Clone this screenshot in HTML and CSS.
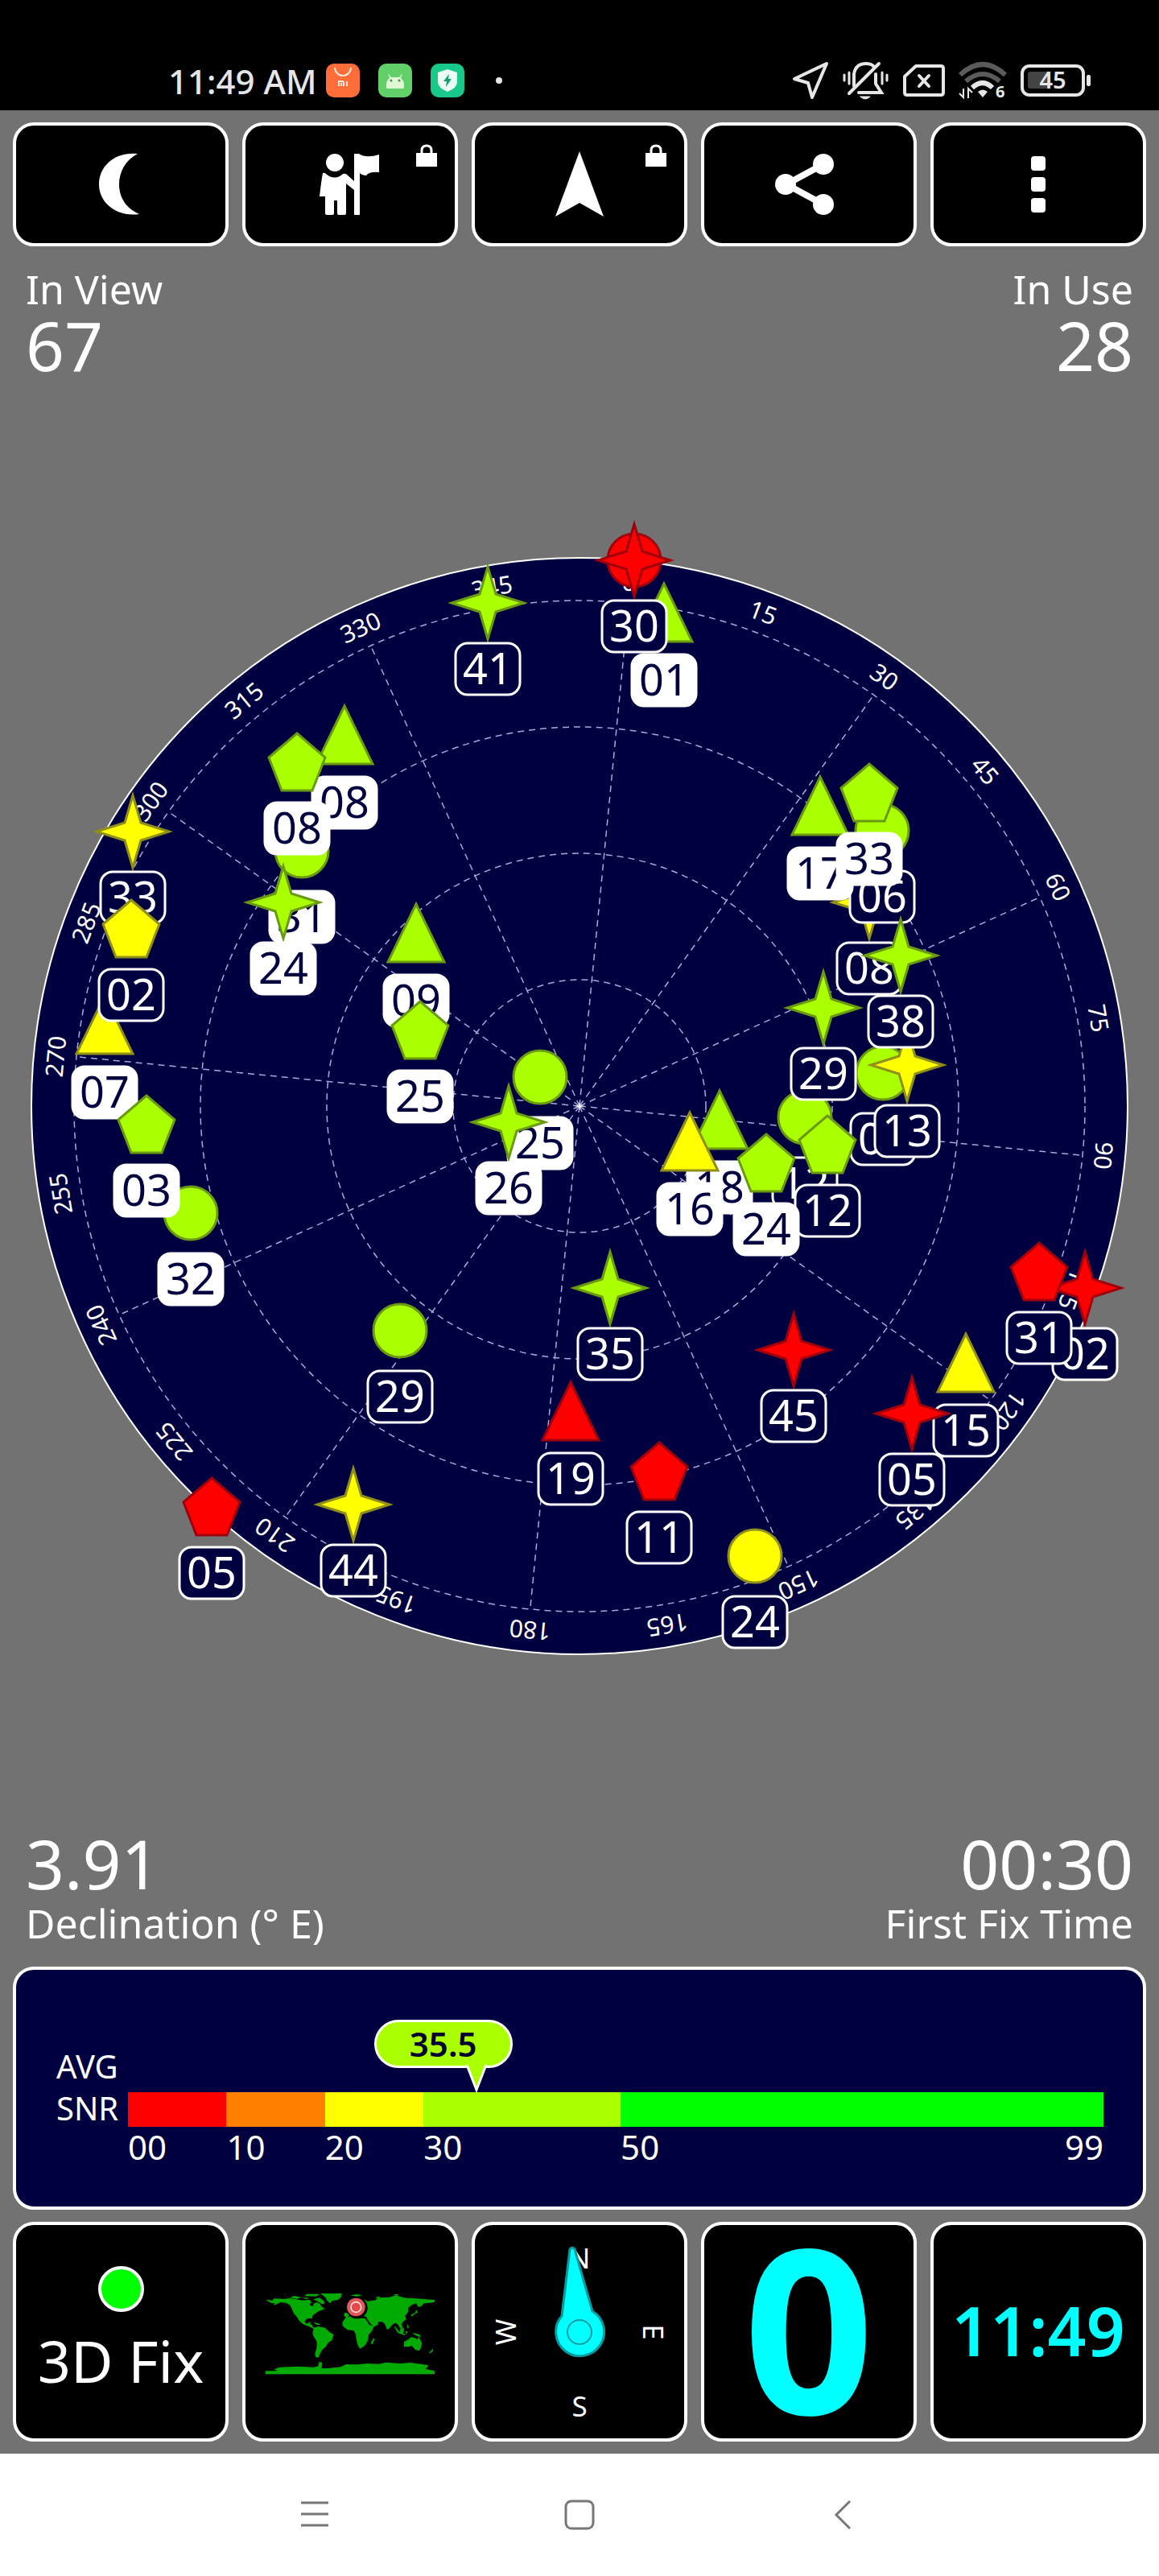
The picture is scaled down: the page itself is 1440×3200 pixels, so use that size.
FILE: index.html
```
<!DOCTYPE html>
<html lang="en">
<head>
  <meta charset="UTF-8">
  <meta name="viewport" content="width=device-width, initial-scale=1">
  <title>GPS Status</title>
  <link rel="stylesheet" href="styles.css">
</head>
<body>

  <!-- Status bar -->
  <header class="statusbar">
    <div class="status-left">
      <span class="clock">11:49 AM</span>
      <svg class="app-icon" viewBox="0 0 42 42">
        <rect width="42" height="42" rx="10" fill="#ff6e38"/>
        <path d="M11 5a10 10 0 0 0 20 0" fill="none" stroke="#ffe6dc" stroke-width="2"/>
        <path d="M16 28v-6h4q2 0 2 2v4M19 24v4M26 22v6" fill="none" stroke="#ffe6dc" stroke-width="2"/>
      </svg>
      <svg class="app-icon" viewBox="0 0 42 42">
        <rect width="42" height="42" rx="10" fill="#62d068"/>
        <path d="M10 30v-4q0-5 4-8l-2-6 4 5h10l4-5-2 6q4 3 4 8v4q0 1-2 1H12q-2 0-2-1z" fill="#e0f7d4"/>
        <circle cx="16" cy="21" r="1.500" fill="#43915a"/>
        <circle cx="26" cy="21" r="1.500" fill="#43915a"/>
      </svg>
      <svg class="app-icon" viewBox="0 0 42 42">
        <rect width="42" height="42" rx="10" fill="#18c98a"/>
        <path d="M21 7l12 4v12q0 7-12 12Q9 30 9 23V11z" fill="#eafcf4"/>
        <path d="M23 13l-7 9h4l-1 7 7-10h-4z" fill="#139b74"/>
      </svg>
      <span class="dot"></span>
    </div>
    <div class="status-right">
      <svg class="st-arrow" viewBox="0 0 46 48"><path d="M43 3L3 22l17 5 5 18z" fill="none" stroke="#e6e6e6" stroke-width="4" stroke-linejoin="round"/></svg>
      <svg class="st-bell" viewBox="0 0 58 48" fill="none" stroke="#e6e6e6" stroke-width="4" stroke-linecap="round">
        <path d="M8 40L45 3M14 31V16Q16 3 29 3q6 0 9 3M41 16v12l7 11H20"/>
        <path d="M2 17v7M8 14v14M49 14v14M55 17v7" stroke-width="3"/>
        <path d="M22 44h12q-6 6-12 0z" fill="#e6e6e6" stroke-width="1"/>
      </svg>
      <svg class="st-sim" viewBox="0 0 52 40" fill="none" stroke="#e6e6e6" stroke-width="4" stroke-linecap="round" stroke-linejoin="round">
        <path d="M16 2h31q3 0 3 3v30q0 3-3 3H5q-3 0-3-3V15z"/>
        <path d="M20 14l12 13M32 14L20 27"/>
      </svg>
      <svg class="st-wifi" viewBox="0 0 60 48" fill="none" stroke-width="6">
        <path d="M2 17Q30-9 58 17" stroke="#5b5b5b"/>
        <path d="M9 25q21-18 42 0" stroke="#5b5b5b"/>
        <path d="M17 33q13-12 25 0" stroke="#e6e6e6"/>
        <path d="M24 38q6-5 12 0l-6 7z" fill="#e6e6e6"/>
        <path d="M6 34v11l-5-5M12 46V34l5 5" stroke="#e6e6e6" stroke-width="2"/>
        <text x="46" y="45" class="wifi-gen">6</text>
      </svg>
      <svg class="st-battery" viewBox="0 0 88 40">
        <rect x="2" y="2" width="76" height="36" rx="9" fill="none" stroke="#e6e6e6" stroke-width="4"/>
        <rect x="9" y="9" width="28" height="21" rx="3" fill="#444"/>
        <rect x="82" y="13" width="5" height="14" rx="2" fill="#e6e6e6"/>
        <text x="40" y="30" text-anchor="middle" class="battery-text">45</text>
      </svg>
    </div>
  </header>

  <main class="app">

    <!-- Toolbar -->
    <nav class="toolbar">
      <button class="tile" type="button" aria-label="Night mode">
        <svg class="icon" viewBox="0 0 78 78"><path d="M48 1C20-2 0 16 0 39s22 41 50 37C16 62 18 16 48 1z" transform="translate(12 0)"/></svg>
      </button>
      <button class="tile" type="button" aria-label="Waypoint">
        <svg class="icon" viewBox="0 0 78 78">
          <circle cx="20" cy="12" r="11"/>
          <path d="M5 25q2-1 4 1 11 9 21 0 3-1 5 1l9 8V1h6q9 6 25 1v22q-12-1-16 4-5 0-8-3v52h-7V46L34 38v37q0 2-2 2h-7q-2 0-2-2V59h-4v16q0 2-2 2h-7q-2 0-2-2V54H1q2-18 4-29z"/>
        </svg>
        <svg class="lock" viewBox="0 0 26 28"><path d="M0 11h26v17H0z"/><path d="M7 12V8q0-6 6-6t6 6v4" fill="none" stroke="#fff" stroke-width="3"/></svg>
      </button>
      <button class="tile" type="button" aria-label="Navigate">
        <svg class="icon" viewBox="0 0 78 78"><path d="M39-2L69 79 39 62 9 79z"/></svg>
        <svg class="lock" viewBox="0 0 26 28"><path d="M0 11h26v17H0z"/><path d="M7 12V8q0-6 6-6t6 6v4" fill="none" stroke="#fff" stroke-width="3"/></svg>
      </button>
      <button class="tile" type="button" aria-label="Share">
        <svg class="icon" viewBox="0 0 78 78">
          <path d="M57 14L11 39l46 25" fill="none" stroke="#fff" stroke-width="8"/>
          <circle cx="57" cy="14" r="13"/><circle cx="10" cy="39" r="13"/><circle cx="57" cy="64" r="13"/>
        </svg>
      </button>
      <button class="tile" type="button" aria-label="More">
        <svg class="icon" viewBox="0 0 78 78"><rect x="30" y="4" width="18" height="18" rx="4"/><rect x="30" y="30" width="18" height="18" rx="4"/><rect x="30" y="56" width="18" height="18" rx="4"/></svg>
      </button>
    </nav>

    <section class="stats">
      <div class="stat"><span class="label">In View</span><span class="value">67</span></div>
      <div class="stat right"><span class="label">In Use</span><span class="value">28</span></div>
    </section>

    <!-- Sky view, origin at the zenith -->
    <section class="sky">
      <svg class="radar" viewBox="-720 -720 1440 1440" role="img" aria-label="Satellites in view">
        <defs>
          <path id="star" d="M0-45L10-11 45 0 10 11 0 45-10 11-45 0-10-11z"/>
          <path id="tri" d="M0-38L35 34H-35z"/>
          <path id="pent" d="M0-36L35-6 19 35H-19L-35-6z"/>
          <circle id="circ" r="33"/>
          <rect id="pill" x="-40" y="50" width="80" height="64" rx="15"/>
        </defs>

        <circle class="disc" r="681"/>
        <g class="grid">
          <circle r="628"/><circle r="471"/><circle r="314"/><circle r="157"/>
          <g transform="rotate(5.6)">
            <path d="M0 0V-628M0 0V628M0 0H-628M0 0H628"/>
            <path transform="rotate(30)" d="M0 0V-628M0 0V628M0 0H-628M0 0H628"/>
            <path transform="rotate(60)" d="M0 0V-628M0 0V628M0 0H-628M0 0H628"/>
          </g>
        </g>
        <path d="M0-6L1-1 6 0 1 1 0 6-1 1-6 0-1-1z" fill="#fff"/>

        <g class="bearings" transform="rotate(5.4)">
          <text y="-643">0</text>
          <text y="-643" transform="rotate(15)">15</text>
          <text y="-643" transform="rotate(30)">30</text>
          <text y="-643" transform="rotate(45)">45</text>
          <text y="-643" transform="rotate(60)">60</text>
          <text y="-643" transform="rotate(75)">75</text>
          <text y="-643" transform="rotate(90)">90</text>
          <text y="-643" transform="rotate(105)">105</text>
          <text y="-643" transform="rotate(120)">120</text>
          <text y="-643" transform="rotate(135)">135</text>
          <text y="-643" transform="rotate(150)">150</text>
          <text y="-643" transform="rotate(165)">165</text>
          <text y="-643" transform="rotate(180)">180</text>
          <text y="-643" transform="rotate(195)">195</text>
          <text y="-643" transform="rotate(210)">210</text>
          <text y="-643" transform="rotate(225)">225</text>
          <text y="-643" transform="rotate(240)">240</text>
          <text y="-643" transform="rotate(255)">255</text>
          <text y="-643" transform="rotate(270)">270</text>
          <text y="-643" transform="rotate(285)">285</text>
          <text y="-643" transform="rotate(300)">300</text>
          <text y="-643" transform="rotate(315)">315</text>
          <text y="-643" transform="rotate(330)">330</text>
          <text y="-643" transform="rotate(345)">345</text>
        </g>

        <!-- Satellites, later ones drawn on top -->
        <g class="sats">
          <g class="good" transform="translate(-114 -625)"><use href="#star"/><use href="#pill" class="pill"/><text y="101">41</text></g>
          <g class="good used" transform="translate(105 -611)"><use href="#tri"/><use href="#pill" class="pill"/><text y="101">01</text></g>
          <g class="bad" transform="translate(68 -678)"><use href="#circ"/><use href="#star"/><use href="#pill" class="pill"/><text y="101">30</text></g>

          <g class="good used" transform="translate(-345 -317)"><use href="#circ"/><use href="#pill" class="pill"/><text y="101">31</text></g>
          <g class="good used" transform="translate(-292 -459)"><use href="#tri"/><use href="#pill" class="pill"/><text y="101">08</text></g>
          <g class="good used" transform="translate(-351 -427)"><use href="#pent"/><use href="#pill" class="pill"/><text y="101">08</text></g>
          <g class="good used" transform="translate(-368 -253)"><use href="#star"/><use href="#pill" class="pill"/><text y="101">24</text></g>

          <g class="weak" transform="translate(-555 -341)"><use href="#star"/><use href="#pill" class="pill"/><text y="101">33</text></g>
          <g class="weak used" transform="translate(-590 -99)"><use href="#tri"/><use href="#pill" class="pill"/><text y="101">07</text></g>
          <g class="weak" transform="translate(-557 -220)"><use href="#pent"/><use href="#pill" class="pill"/><text y="101">02</text></g>
          <g class="good used" transform="translate(-483 133)"><use href="#circ"/><use href="#pill" class="pill"/><text y="101">32</text></g>
          <g class="good used" transform="translate(-538 23)"><use href="#pent"/><use href="#pill" class="pill"/><text y="101">03</text></g>

          <g class="good used" transform="translate(-203 -213)"><use href="#tri"/><use href="#pill" class="pill"/><text y="101">09</text></g>
          <g class="good used" transform="translate(-198 -94)"><use href="#pent"/><use href="#pill" class="pill"/><text y="101">25</text></g>
          <g class="good used" transform="translate(-49 -36)"><use href="#circ"/><use href="#pill" class="pill"/><text y="101">25</text></g>
          <g class="good used" transform="translate(-88 20)"><use href="#star"/><use href="#pill" class="pill"/><text y="101">26</text></g>

          <g class="weak" transform="translate(360 -253)"><use href="#star"/><use href="#pill" class="pill"/><text y="101">08</text></g>
          <g class="good" transform="translate(376 -342)"><use href="#circ"/><use href="#pill" class="pill"/><text y="101">06</text></g>
          <g class="good used" transform="translate(299 -371)"><use href="#tri"/><use href="#pill" class="pill"/><text y="101">17</text></g>
          <g class="good used" transform="translate(360 -389)"><use href="#pent"/><use href="#pill" class="pill"/><text y="101">33</text></g>

          <g class="good" transform="translate(280 14)"><use href="#circ"/><use href="#pill" class="pill"/><text y="101">12</text></g>
          <g class="good" transform="translate(377 -41)"><use href="#circ"/><use href="#pill" class="pill"/><text y="101">05</text></g>
          <g class="weak" transform="translate(407 -51)"><use href="#star"/><use href="#pill" class="pill"/><text y="101">13</text></g>
          <g class="good" transform="translate(399 -187)"><use href="#star"/><use href="#pill" class="pill"/><text y="101">38</text></g>
          <g class="good" transform="translate(303 -122)"><use href="#star"/><use href="#pill" class="pill"/><text y="101">29</text></g>
          <g class="good" transform="translate(308 48)"><use href="#pent"/><use href="#pill" class="pill"/><text y="101">12</text></g>
          <g class="good used" transform="translate(174 19)"><use href="#tri"/><use href="#pill" class="pill"/><text y="101">18</text></g>
          <g class="weak used" transform="translate(137 46)"><use href="#tri"/><use href="#pill" class="pill"/><text y="101">16</text></g>
          <g class="good used" transform="translate(232 71)"><use href="#pent"/><use href="#pill" class="pill"/><text y="101">24</text></g>

          <g class="good" transform="translate(38 226)"><use href="#star"/><use href="#pill" class="pill"/><text y="101">35</text></g>
          <g class="good" transform="translate(-223 279)"><use href="#circ"/><use href="#pill" class="pill"/><text y="101">29</text></g>
          <g class="bad" transform="translate(-11 381)"><use href="#tri"/><use href="#pill" class="pill"/><text y="101">19</text></g>
          <g class="bad" transform="translate(99 454)"><use href="#pent"/><use href="#pill" class="pill"/><text y="101">11</text></g>
          <g class="bad" transform="translate(-457 498)"><use href="#pent"/><use href="#pill" class="pill"/><text y="101">05</text></g>
          <g class="weak" transform="translate(-281 495)"><use href="#star"/><use href="#pill" class="pill"/><text y="101">44</text></g>
          <g class="weak" transform="translate(218 559)"><use href="#circ"/><use href="#pill" class="pill"/><text y="101">24</text></g>
          <g class="bad" transform="translate(266 303)"><use href="#star"/><use href="#pill" class="pill"/><text y="101">45</text></g>
          <g class="weak" transform="translate(480 321)"><use href="#tri"/><use href="#pill" class="pill"/><text y="101">15</text></g>
          <g class="bad" transform="translate(413 382)"><use href="#star"/><use href="#pill" class="pill"/><text y="101">05</text></g>
          <g class="bad" transform="translate(628 226)"><use href="#star"/><use href="#pill" class="pill"/><text y="101">02</text></g>
          <g class="bad" transform="translate(571 206)"><use href="#pent"/><use href="#pill" class="pill"/><text y="101">31</text></g>
        </g>
      </svg>
    </section>

    <section class="stats bottom">
      <div class="stat"><span class="value">3.91</span><span class="label">Declination (° E)</span></div>
      <div class="stat right"><span class="value">00:30</span><span class="label">First Fix Time</span></div>
    </section>

    <!-- Signal strength -->
    <section class="snr">
      <div class="snr-label"><span>AVG</span><span>SNR</span></div>
      <div class="snr-scale">
        <div class="bar">
          <span class="seg s0"></span><span class="seg s10"></span><span class="seg s20"></span><span class="seg s30"></span><span class="seg s50"></span>
          <div class="marker" style="left: 35.7%">
            <span class="bubble">35.5</span>
            <svg class="pointer" viewBox="0 0 28 34"><path d="M2 0L14 31 26 0" fill="#af0" stroke="#fff" stroke-width="3"/></svg>
          </div>
        </div>
        <div class="ticks">
          <span class="t10">00</span><span class="t10">10</span><span class="t10">20</span><span class="t20">30</span><span class="t49">50</span><span class="last">99</span>
        </div>
      </div>
    </section>

    <!-- Gauges -->
    <section class="gauges">
      <button class="tile fix" type="button"><span class="led"></span><span>3D Fix</span></button>
      <button class="tile" type="button" aria-label="World map">
        <svg class="map" viewBox="60 54 630 304">
          <g fill="#0a0">
            <path d="M60 79l14 2 12 1 4-7 40 1 20-2 25 4 25 4 22-3 10 9-9 9 12 8 5-12 10-4 12 5 8 12 11 6-14 7-10 4-12 8-10 8-2 11-10-2-12 4-5 8 6 9 9-4 7-5-2 10 8 3 2 8 10 4-8 2-12-6-14-6-14-6-12-10-10-16-12-14-6-16-8-14-14-8-20-2-18 8-8 3 4-8-13 0z"/>
            <path d="M264 56h81l-4 14-11 10-22 4-8 9-10-9-7-13zM150 72l16-7 28 5-18 6zM205 66l8-8h48l-12 9zM238 78l22-6 16 10 4 12-10 2-14-9zM195 72l26 0-8 6zM236 163l20 4 12 7-18-2z"/>
            <path d="M240 184l16-5 26 5 15 15 17 10-7 22-14 9-9 15-12 10-10 17-5 13-11-2-2-13 6-20 1-24-12-20-4-12z"/>
            <path d="M360 144l32-4 10 6 30 4 14 22 18 8-8 16-12 14-2 20-12 20-18 12-8-12-6-22-2-20-8-14-22-2-18-14-2-14zM462 222l4 6-7 16-8-1z"/>
            <path d="M352 140l2-12 14 0-8-10 14-10 16-8 6-14 14-8 20 2 10 5 30-4 10-9 40-2 25-7 30 9 45 3 40 3 30 2v8l-18 3-22 2-10 12-12 1-6-13-17 6-13 10-1 16-11 15 4 13-12 9-6 10 6 9-10 6-8-14-8-7-12 5-14 16-8 3-8-21-10-7-14 0-1 10-17 9-14-16-8-12-5-10-16-4-10-6-10 6-20-6-16 12zM376 64l20-5 25 3-18 5zM466 72l22-6-8 8zM535 60l22-2-8 6z"/>
            <path d="M622 116l5 10-22 15-6-4 18-8zM542 178l16 20 22 10-2 4-24-8-14-22zM560 188l16-5-2 20-12 0zM586 168l9 16-6 2zM605 203l29 5 4 12-18-7zM582 196l8 2-6 12z"/>
            <path d="M576 236l15-8 11-9 15 3 8 5 6-9 12 24-5 19-7 9-14-5-11-13-18 3-12 0zM684 262v9l-13 9-2-3z"/>
            <path d="M60 345h45l-14-6 20-8 69-3 60 3 16-4 4-17 12 5-4 20 22 0 50-5 20-10 40 1 40-4 40 2 30-6 50 4 40-3 40 5 28 5-12 13 34 8v12H60z"/>
          </g>
          <circle cx="400" cy="110" r="40" fill="#000"/>
          <circle cx="397" cy="107" r="34" fill="#e0585a"/>
          <circle cx="397" cy="107" r="19" fill="#e5484b" stroke="#ffe3d8" stroke-width="5"/>
        </svg>
      </button>
      <button class="tile" type="button" aria-label="Compass">
        <svg class="compass" viewBox="-130 -130 260 260">
          <g class="rose">
            <text y="-79">N</text><text y="105">S</text>
            <text transform="rotate(-90)" y="-79">W</text><text transform="rotate(90)" y="-79">E</text>
          </g>
          <path d="M-12-103Q-9-107-6-103L16-26A30 30 0 1 1-22-20z" fill="#0ff" stroke="#079a9e" stroke-width="3"/>
          <circle r="15" fill="#0ff" stroke="#079a9e" stroke-width="2"/>
        </svg>
      </button>
      <button class="tile speed" type="button">0</button>
      <button class="tile time" type="button">11:49</button>
    </section>
  </main>

  <!-- System navigation -->
  <footer class="navbar">
    <button type="button" aria-label="Recent apps"><svg viewBox="0 0 38 38"><path d="M2 4h34M2 18h34M2 32h34"/></svg></button>
    <button type="button" aria-label="Home"><svg viewBox="0 0 38 38"><rect x="2" y="2" width="34" height="34" rx="7"/></svg></button>
    <button type="button" aria-label="Back"><svg viewBox="0 0 38 38"><path d="M26 2L9 19l17 17"/></svg></button>
  </footer>

</body>
</html>
```
FILE: styles.css
```
* {
  box-sizing: border-box;
}
body {
  margin: 0;
  min-height: 100vh;
  display: flex;
  flex-direction: column;
  background: #fff;
  color: #fff;
  font-family: "Noto Sans", "Open Sans", sans-serif;
}
button {
  font-family: inherit;
  color: inherit;
  padding: 0;
  cursor: pointer;
}
svg {
  display: block;
}

/* status bar */
.statusbar {
  height: 137px;
  padding: 63px 84px 0 209px;
  background: #000;
  display: flex;
  justify-content: space-between;
  align-items: flex-start;
}
.status-left,
.status-right {
  display: flex;
  align-items: center;
  height: 74px;
}
.status-left {
  gap: 23px;
}
.clock {
  font-size: 42px;
  font-weight: 500;
  color: #e6e6e6;
  margin-right: -12px;
}
.app-icon {
  width: 42px;
  height: 42px;
}
.dot {
  width: 8px;
  height: 8px;
  border-radius: 50%;
  background: #e6e6e6;
  margin-left: 16px;
}
.status-right {
  gap: 17px;
}
.st-arrow {
  width: 46px;
  height: 48px;
}
.st-bell {
  width: 58px;
  height: 48px;
}
.st-sim {
  width: 52px;
  height: 40px;
}
.st-wifi {
  width: 60px;
  height: 48px;
  overflow: visible;
}
.st-battery {
  width: 88px;
  height: 40px;
}
.wifi-gen {
  font-size: 20px;
  font-weight: 700;
  fill: #e6e6e6;
}
.battery-text {
  font-size: 29px;
  font-weight: 600;
  fill: #e6e6e6;
}

/* app */
.app {
  flex: 1;
  display: flex;
  flex-direction: column;
  padding: 15px 16px;
  background: #727272;
}
.toolbar,
.gauges {
  display: grid;
  grid-template-columns: repeat(5, 1fr);
  gap: 17px;
}
.tile {
  position: relative;
  display: flex;
  align-items: center;
  justify-content: center;
  background: #000;
  border: 4px solid #fff;
  border-radius: 26px;
}
.toolbar .tile {
  height: 154px;
}
.icon {
  width: 78px;
  height: 78px;
  fill: #fff;
  overflow: visible;
}
.lock {
  position: absolute;
  top: 23px;
  right: 22px;
  width: 26px;
  height: 28px;
  fill: #fff;
}

.stats {
  display: flex;
  justify-content: space-between;
  padding: 23px 16px 0;
}
.stats.bottom {
  padding: 0 16px 24px;
}
.stat {
  display: flex;
  flex-direction: column;
}
.bottom .stat {
  gap: 4px;
}
.stat.right {
  text-align: right;
}
.label {
  font-size: 50px;
  line-height: 60px;
}
.value {
  font-size: 84px;
  line-height: 80px;
}

/* sky view */
.sky {
  flex: 1;
  display: flex;
  align-items: center;
  margin: 0 -16px;
  padding-top: 4px;
}
.radar {
  width: 100%;
  overflow: visible;
}
.disc {
  fill: #000040;
  stroke: #fff;
  stroke-width: 2;
}
.grid {
  fill: none;
  stroke: #a9a9dc;
  stroke-width: 1.5;
  stroke-dasharray: 8 6;
}
.bearings {
  font-size: 30px;
  fill: #fff;
  text-anchor: middle;
}
.sats {
  font-size: 54px;
  text-anchor: middle;
  stroke-width: 3;
}
.good {
  fill: #af0;
  stroke: #699a12;
}
.weak {
  fill: #ff0;
  stroke: #8f8f1a;
}
.bad {
  fill: #f00;
  stroke: #a0000c;
}
.sats .pill {
  fill: #000040;
  stroke: #fff;
}
.sats text {
  fill: #fff;
  stroke: none;
}
.sats .used .pill {
  fill: #fff;
}
.sats .used text {
  fill: #000040;
}

/* snr */
.snr {
  display: flex;
  height: 302px;
  padding: 94px 49px 0 50px;
  background: #000040;
  border: 4px solid #fff;
  border-radius: 26px;
  font-size: 40px;
}
.snr-label {
  display: flex;
  flex-direction: column;
  width: 89px;
  line-height: 52px;
}
.snr-scale {
  flex: 1;
  padding-top: 58px;
}
.bar {
  position: relative;
  display: flex;
  height: 43px;
}
.seg {
  flex: 10;
}
.s0 { background: #f00; }
.s10 { background: #ff8000; }
.s20 { background: #ff0; }
.s30 { background: #af0; flex: 20; }
.s50 { background: #0f0; flex: 49; }
.marker {
  position: absolute;
  bottom: 100%;
}
.bubble {
  position: absolute;
  bottom: 30px;
  left: -127px;
  width: 172px;
  height: 60px;
  border: 3px solid #fff;
  border-radius: 30px;
  background: #af0;
  color: #000030;
  font-size: 42px;
  font-weight: 600;
  line-height: 54px;
  text-align: center;
}
.pointer {
  position: absolute;
  bottom: 0;
  left: -14px;
  width: 28px;
  height: 34px;
}
.ticks {
  display: flex;
  position: relative;
  font-size: 42px;
  line-height: 50px;
}
.t10 { flex: 10 0 0; }
.t20 { flex: 20 0 0; }
.t49 { flex: 49 0 0; }
.last {
  position: absolute;
  right: 0;
}

/* gauges */
.gauges {
  margin-top: 15px;
}
.gauges .tile {
  height: 273px;
}
.gauges .fix {
  flex-direction: column;
  gap: 10px;
  padding-top: 4px;
  font-size: 72px;
  line-height: 100px;
  white-space: nowrap;
}
.led {
  width: 57px;
  height: 57px;
  border: 4px solid #fff;
  border-radius: 50%;
  background: #0f0;
}
.map {
  width: 210px;
  height: 102px;
  margin-top: 4px;
}
.compass {
  width: 260px;
  height: 260px;
}
.rose {
  font-size: 35px;
  fill: #fff;
  text-anchor: middle;
}
.gauges .speed {
  padding-bottom: 16px;
  font-size: 284px;
  font-weight: 700;
  line-height: 240px;
  color: #0ff;
}
.gauges .time {
  padding-bottom: 4px;
  font-size: 84px;
  font-weight: 600;
  color: #0ff;
}

/* system navigation */
.navbar {
  display: flex;
  justify-content: space-between;
  align-items: center;
  height: 152px;
  padding: 0 372px;
}
.navbar button {
  border: 0;
  background: none;
}
.navbar svg {
  width: 38px;
  height: 38px;
  fill: none;
  stroke: #777;
  stroke-width: 3;
}
```
